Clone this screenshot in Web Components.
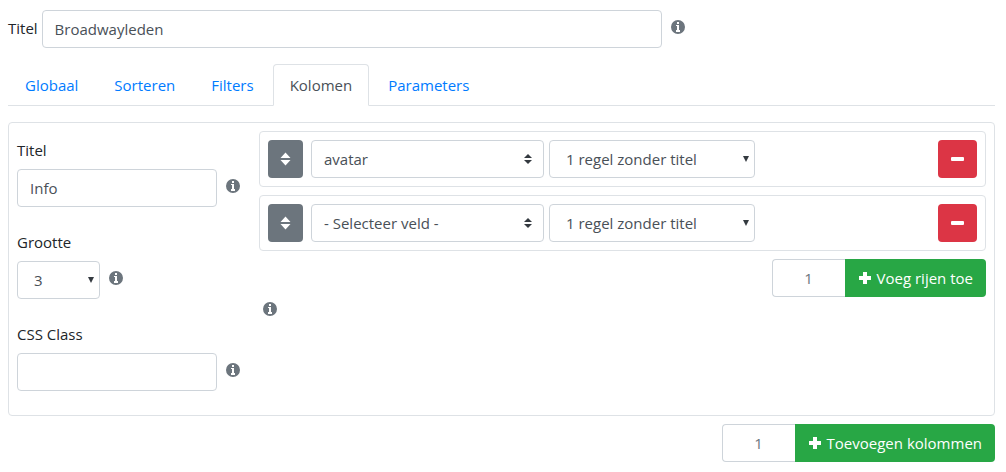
<!DOCTYPE html>
<html lang="nl">
<head>
<meta charset="utf-8">
<meta name="viewport" content="width=device-width, initial-scale=1">
<title>Kolomen</title>
<style>
    body {
        margin: 0;
        padding: 10px 11px 10px 8px;
        background-color: #fff;
        color: #212529;
        font: 15px/24px "Segoe UI", "Open Sans", sans-serif;
    }
</style>
</head>
<body>
    <lijst-editor></lijst-editor>

<script>
const basis = `
    * { box-sizing: border-box; }
    input, select, button {
        font: inherit;
        margin: 0;
        height: 38px;
        border-radius: 4px;
    }
    input, select {
        appearance: none;
        width: 100%;
        min-width: 0;
        padding: 6px 12px;
        border: 1px solid #ced4da;
        background-color: #fff;
        color: #495057;
    }
    button {
        border: 0;
        padding: 6px 12px;
        color: #fff;
        cursor: pointer;
    }
    svg { display: block; fill: currentColor; }
`

class InfoIcoon extends HTMLElement {
    constructor() {
        super()
        this.shadow = this.attachShadow({ mode: 'open' });
    }

    connectedCallback() {
        this.shadow.innerHTML = `
            <style>
                :host { display: block; flex: none; color: #6c757d; }
                svg { display: block; fill: currentColor; }
            </style>
            <svg width="14" height="14" viewBox="0 0 14 14" aria-hidden="true">
                <path fill-rule="evenodd" d="M7 0a7 7 0 1 1 0 14A7 7 0 0 1 7 0zM6 2v2h2V2zM5 5v1h1v4H5v2h4v-2H8V5z"/>
            </svg>
        `
    }
}

// Tekstvak of keuzelijst met label, richting="rij" zet het label ervoor
class VeldKomponent extends HTMLElement {
    constructor() {
        super()
        this.shadow = this.attachShadow({ mode: 'open' });
    }

    veld() {
        const waarde = this.getAttribute("waarde") || ""

        if (this.getAttribute("soort") == "keuze") {
            return `<keuze-lijst id="veld" waarde="${waarde}" label="${this.getAttribute("label")}"></keuze-lijst>`
        }
        return `<input id="veld" type="text" value="${waarde}">`
    }

    connectedCallback() {
        this.shadow.innerHTML = `
            <style>
                ${basis}
                :host { display: flex; flex-direction: column; gap: 7px; }
                :host([richting="rij"]) { flex-direction: row; gap: 4px; }
                :host([richting="rij"]) label { padding-top: 6px; }
                .vak { display: flex; gap: 9px; flex: 1; }
                .invoer { width: var(--breedte, 200px); }
                info-icoon { padding-top: 10px; }
            </style>
            <label for="veld">${this.getAttribute("label")}</label>
            <div class="vak">
                <div class="invoer">${this.veld()}</div>
                <info-icoon></info-icoon>
            </div>
        `
    }
}

class KeuzeLijst extends HTMLElement {
    static formAssociated = true

    constructor() {
        super()
        this.shadow = this.attachShadow({ mode: 'open', delegatesFocus: true });
    }

    pijl() {
        if (this.hasAttribute("dubbel")) {
            return `<svg width="8" height="10" viewBox="0 0 8 10" aria-hidden="true"><path d="M4 0l4 4H0zM0 6h8l-4 4z"/></svg>`
        }
        return `<svg width="6" height="6" viewBox="0 0 6 6" aria-hidden="true"><path d="M0 0h6L3 6z"/></svg>`
    }

    connectedCallback() {
        this.shadow.innerHTML = `
            <style>
                ${basis}
                :host { display: grid; align-items: center; }
                select, svg { grid-area: 1 / 1; }
                select { padding-left: 16px; }
                svg { justify-self: end; margin-right: 6px; color: #343a40; pointer-events: none; }
                :host([dubbel]) select { padding-left: 12px; }
                :host([dubbel]) svg { margin-right: 12px; }
            </style>
            <select aria-label="${this.getAttribute("label")}">
                <option>${this.getAttribute("waarde")}</option>
            </select>
            ${this.pijl()}
        `
    }
}

class TabBalk extends HTMLElement {
    constructor(tabs = ["Globaal", "Sorteren", "Filters", "Kolomen", "Parameters"]) {
        super()
        this.shadow = this.attachShadow({ mode: 'open' });
        this.tabs = tabs
    }

    lenker() {
        let html = ""

        this.tabs.forEach((tab) => {
            html += `<a href="#${tab.toLowerCase()}" ${tab == "Kolomen" ? 'class="actief" aria-current="page"' : ""}>${tab}</a>`
        })

        return html
    }

    connectedCallback() {
        this.shadow.innerHTML = `
            <style>
                :host { display: block; }
                nav { display: flex; gap: 2px; border-bottom: 1px solid #dee2e6; }
                a {
                    padding: 8px 16px;
                    margin-bottom: -1px;
                    border: 1px solid transparent;
                    border-radius: 4px 4px 0 0;
                    color: #007bff;
                    text-decoration: none;
                }
                .actief {
                    color: #495057;
                    background-color: #fff;
                    border-color: #dee2e6 #dee2e6 #fff;
                }
            </style>
            <nav>${this.lenker()}</nav>
        `
    }
}

class VeldRij extends HTMLElement {
    constructor() {
        super()
        this.shadow = this.attachShadow({ mode: 'open' });
    }

    connectedCallback() {
        this.shadow.innerHTML = `
            <style>
                ${basis}
                :host {
                    display: flex;
                    padding: 8px;
                    border: 1px solid #dee2e6;
                    border-radius: 4px;
                }
                .sleep { background-color: #6c757d; margin-right: 8px; }
                .veld { width: 233px; margin-right: 5px; }
                .weergave { width: 206px; }
                .weg { background-color: #dc3545; margin-left: auto; }
            </style>
            <button class="sleep" type="button" aria-label="Verplaatsen">
                <svg width="11" height="14" viewBox="0 0 11 14"><path d="M5.500 0.500L10.500 6H.500zM.500 8h10l-5 5.500z"/></svg>
            </button>
            <keuze-lijst class="veld" dubbel label="Veld" waarde="${this.getAttribute("veld")}"></keuze-lijst>
            <keuze-lijst class="weergave" label="Weergave" waarde="1 regel zonder titel"></keuze-lijst>
            <button class="weg" type="button" aria-label="Verwijderen">
                <svg width="15" height="14" viewBox="0 0 15 14"><rect x="1" y="5" width="13" height="4" rx="1"/></svg>
            </button>
        `
    }
}

class VoegToe extends HTMLElement {
    constructor() {
        super()
        this.shadow = this.attachShadow({ mode: 'open' });
    }

    connectedCallback() {
        this.shadow.innerHTML = `
            <style>
                ${basis}
                :host { display: flex; justify-content: flex-end; }
                input {
                    width: 73px;
                    border-right: 0;
                    border-radius: 4px 0 0 4px;
                    color: #6c757d;
                    text-align: center;
                }
                button {
                    display: flex;
                    align-items: center;
                    gap: 5px;
                    padding: 6px 13px;
                    border-radius: 0 4px 4px 0;
                    background-color: #28a745;
                }
            </style>
            <input type="text" inputmode="numeric" value="1" aria-label="Aantal">
            <button type="button">
                <svg width="14" height="14" viewBox="0 0 14 14" aria-hidden="true"><path d="M5 1h4v4h4v4H9v4H5V9H1V5h4z"/></svg>
                <slot></slot>
            </button>
        `
    }
}

class LijstEditor extends HTMLElement {
    constructor() {
        super()
        this.shadow = this.attachShadow({ mode: 'open' });
    }

    connectedCallback() {
        this.shadow.innerHTML = `
            <style>
                :host { display: flex; flex-direction: column; }
                .titel { --breedte: 620px; }
                tab-balk { margin-top: 16px; }
                .kolom {
                    display: flex;
                    gap: 19px;
                    margin: 16px 0 8px;
                    padding: 8px;
                    border: 1px solid #dee2e6;
                    border-radius: 4px;
                }
                .instellingen {
                    display: flex;
                    flex-direction: column;
                    gap: 23px;
                    padding: 7px 0 16px;
                }
                .grootte { --breedte: 83px; }
                .rijen {
                    display: flex;
                    flex-direction: column;
                    gap: 8px;
                    flex: 1;
                }
                .rijen info-icoon { padding-left: 4px; margin-top: -3px; }
            </style>
            <veld-komponent class="titel" richting="rij" label="Titel" waarde="Broadwayleden"></veld-komponent>
            <tab-balk></tab-balk>
            <div class="kolom">
                <div class="instellingen">
                    <veld-komponent label="Titel" waarde="Info"></veld-komponent>
                    <veld-komponent class="grootte" soort="keuze" label="Grootte" waarde="3"></veld-komponent>
                    <veld-komponent label="CSS Class"></veld-komponent>
                </div>
                <div class="rijen">
                    <veld-rij veld="avatar"></veld-rij>
                    <veld-rij veld="- Selecteer veld -"></veld-rij>
                    <voeg-toe>Voeg rijen toe</voeg-toe>
                    <info-icoon></info-icoon>
                </div>
            </div>
            <voeg-toe>Toevoegen kolommen</voeg-toe>
        `
    }
}

customElements.define('info-icoon', InfoIcoon);
customElements.define('keuze-lijst', KeuzeLijst);
customElements.define('veld-komponent', VeldKomponent);
customElements.define('tab-balk', TabBalk);
customElements.define('veld-rij', VeldRij);
customElements.define('voeg-toe', VoegToe);
customElements.define('lijst-editor', LijstEditor);
</script>
</body>
</html>
